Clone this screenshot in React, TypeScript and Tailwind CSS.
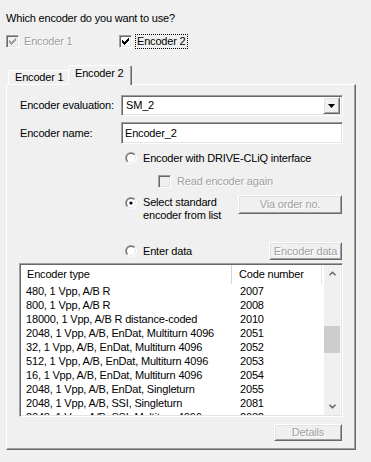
import React from 'react';

const rows: [string, string][] = [
  ['480, 1 Vpp, A/B R', '2007'],
  ['800, 1 Vpp, A/B R', '2008'],
  ['18000, 1 Vpp, A/B R distance-coded', '2010'],
  ['2048, 1 Vpp, A/B, EnDat, Multiturn 4096', '2051'],
  ['32, 1 Vpp, A/B, EnDat, Multiturn 4096', '2052'],
  ['512, 1 Vpp, A/B, EnDat, Multiturn 4096', '2053'],
  ['16, 1 Vpp, A/B, EnDat, Multiturn 4096', '2054'],
  ['2048, 1 Vpp, A/B, EnDat, Singleturn', '2055'],
  ['2048, 1 Vpp, A/B, SSI, Singleturn', '2081'],
  ['2048, 1 Vpp, A/B, SSI, Multiturn 4096', '2082'],
];

const sunken =
  'border border-t-[#a0a0a0] border-l-[#a0a0a0] border-r-white border-b-white shadow-[inset_1px_1px_0_#696969,inset_-1px_-1px_0_#e3e3e3]';
const raised =
  'border border-t-white border-l-white border-r-[#696969] border-b-[#696969] shadow-[inset_1px_1px_0_#e3e3e3,inset_-1px_-1px_0_#a0a0a0]';

const CHECK =
  'M6 0h1v1h-1z M5 1h2v1h-2z M0 2h1v1h-1z M4 2h3v1h-3z M0 3h2v1h-2z M3 3h3v1h-3z M0 4h5v1h-5z M1 5h3v1h-3z M2 6h1v1h-1z';

function CheckBox({ checked, disabled }: { checked?: boolean; disabled?: boolean }) {
  return (
    <span
      className={`w-[13px] h-[13px] shrink-0 flex items-center justify-center ${sunken} ${
        disabled ? 'bg-[#f0f0f0]' : 'bg-white'
      }`}
    >
      {checked && (
        <svg width="7" height="7" viewBox="0 0 7 7" shapeRendering="crispEdges">
          <path d={CHECK} fill={disabled ? '#a0a0a0' : '#000'} />
        </svg>
      )}
    </span>
  );
}

function Radio({ checked }: { checked?: boolean }) {
  return (
    <svg width="12" height="12" viewBox="0 0 12 12" className="shrink-0">
      <defs>
        <linearGradient id="rOuter" x1="0" y1="0" x2="1" y2="1">
          <stop offset="0.5" stopColor="#a0a0a0" />
          <stop offset="0.5" stopColor="#ffffff" />
        </linearGradient>
        <linearGradient id="rInner" x1="0" y1="0" x2="1" y2="1">
          <stop offset="0.5" stopColor="#696969" />
          <stop offset="0.5" stopColor="#e3e3e3" />
        </linearGradient>
      </defs>
      <circle cx="6" cy="6" r="6" fill="url(#rOuter)" />
      <circle cx="6" cy="6" r="5" fill="url(#rInner)" />
      <circle cx="6" cy="6" r="4" fill="#fff" />
      {checked && <circle cx="6" cy="6" r="1.6" fill="#000" />}
    </svg>
  );
}

function DisabledButton({ label, className }: { label: string; className: string }) {
  return (
    <div
      className={`flex items-center justify-center whitespace-nowrap bg-[#f0f0f0] text-[#a0a0a0] [text-shadow:1px_1px_0_#fff] ${raised} ${className}`}
    >
      {label}
    </div>
  );
}

function Chevron({ up }: { up?: boolean }) {
  return (
    <svg width="7" height="5" viewBox="0 0 7 5">
      <path
        d={up ? 'M0.5 4.2 L3.5 1.2 L6.5 4.2' : 'M0.5 0.8 L3.5 3.8 L6.5 0.8'}
        fill="none"
        stroke="#606060"
        strokeWidth="1.4"
      />
    </svg>
  );
}

export default function App() {
  return (
    <div className="w-[371px] h-[462px] overflow-hidden bg-[#f0f0f0] text-[11px] leading-[13px] tracking-[-0.18px] text-black font-['Liberation_Sans',Arial,sans-serif] flex flex-col">
      <p className="pt-[12px] pl-[6px]">Which encoder do you want to use?</p>

      {/* Encoder selection */}
      <div className="mt-[9px] h-[15px] flex items-center pl-[6px]">
        <div className="w-[113px] flex items-center gap-[5px]">
          <CheckBox checked disabled />
          <span className="text-[#a0a0a0] [text-shadow:1px_1px_0_#fff]">Encoder 1</span>
        </div>
        <CheckBox checked />
        <span className="ml-[3px] h-[15px] px-[1px] flex items-center border border-dotted border-black">
          Encoder 2
        </span>
      </div>

      {/* Tabs */}
      <div className="mt-[16px] h-[20px] -mb-px flex items-end pl-[8px] relative z-10">
        <div className="h-[14px] w-[60px] mb-px pl-[6px] border-t border-l border-t-white border-l-white rounded-tl-[2px]">
          Encoder 1
        </div>
        <div className="h-[20px] w-[64px] pl-[6px] pt-[1px] bg-[#f0f0f0] border-t border-l border-r border-t-white border-l-white border-r-[#696969] shadow-[inset_-1px_0_0_#a0a0a0] rounded-tl-[2px] rounded-tr-[2px]">
          Encoder 2
        </div>
      </div>

      {/* Tab page */}
      <div className="ml-[6px] w-[350px] h-[366px] pl-[13px] flex flex-col border border-t-white border-l-white border-r-[#696969] border-b-[#696969] shadow-[inset_-1px_-1px_0_#a0a0a0]">
        <div className="mt-[10px] h-[21px] flex items-center">
          <span className="w-[101px]">Encoder evaluation:</span>
          <div className={`w-[222px] h-[21px] bg-white flex items-center pl-[4px] pr-[2px] ${sunken}`}>
            <span className="flex-1">SM_2</span>
            <div className={`w-[17px] h-[17px] bg-[#f0f0f0] flex items-center justify-center ${raised}`}>
              <svg width="7" height="4" viewBox="0 0 7 4">
                <path d="M0 0h7L3.5 4z" fill="#000" />
              </svg>
            </div>
          </div>
        </div>

        <div className="mt-[6px] h-[22px] flex items-center">
          <span className="w-[101px]">Encoder name:</span>
          <div className={`w-[222px] h-[22px] bg-white flex items-center pl-[3px] ${sunken}`}>Encoder_2</div>
        </div>

        <div className="mt-[7px] h-[14px] flex items-center gap-[6px] pl-[105px]">
          <Radio />
          <span>Encoder with DRIVE-CLiQ interface</span>
        </div>

        <div className="mt-[9px] h-[14px] flex items-center gap-[6px] pl-[138px]">
          <CheckBox disabled />
          <span className="text-[#a0a0a0] [text-shadow:1px_1px_0_#fff]">Read encoder again</span>
        </div>

        <div className="mt-[7px] flex items-start pl-[105px]">
          <div className="mt-[2px]">
            <Radio checked />
          </div>
          <p className="ml-[6px] mt-[1px] w-[95px]">
            Select standard
            <br />
            encoder from list
          </p>
          <DisabledButton label="Via order no." className="w-[104px] h-[19px]" />
        </div>

        <div className="mt-[20px] h-[18px] flex items-center pl-[105px]">
          <Radio />
          <span className="ml-[6px] w-[126px]">Enter data</span>
          <DisabledButton label="Encoder data" className="w-[73px] h-[18px]" />
        </div>

        {/* Encoder list */}
        <div className={`mt-[3px] -ml-px w-[324px] h-[154px] bg-white flex ${sunken} p-[1px]`}>
          <div className="flex-1 flex flex-col overflow-hidden">
            <div className="h-[19px] shrink-0 flex items-center">
              <div className="w-[211px] h-full pl-[6px] flex items-center border-r border-r-[#d5d5d5]">Encoder type</div>
              <div className="w-[90px] h-full pl-[7px] flex items-center border-r border-r-[#e5e5e5]">Code number</div>
            </div>
            {rows.map(([type, code]) => (
              <div key={type + code} className="h-[14px] shrink-0 flex items-center">
                <span className="w-[211px] pl-[5px] whitespace-nowrap">{type}</span>
                <span className="pl-[8px]">{code}</span>
              </div>
            ))}
          </div>
          <div className="w-[17px] h-full bg-[#f0f0f0] flex flex-col border-r border-r-[#fafafa]">
            <div className="h-[17px] flex items-center justify-center">
              <Chevron up />
            </div>
            <div className="mt-[44px] h-[27px] w-[16px] bg-[#cdcdcd]" />
            <div className="mt-auto h-[17px] flex items-center justify-center">
              <Chevron />
            </div>
          </div>
        </div>

        <div className="mt-[7px] pl-[254px]">
          <DisabledButton label="Details" className="w-[68px] h-[17px]" />
        </div>
      </div>
    </div>
  );
}
